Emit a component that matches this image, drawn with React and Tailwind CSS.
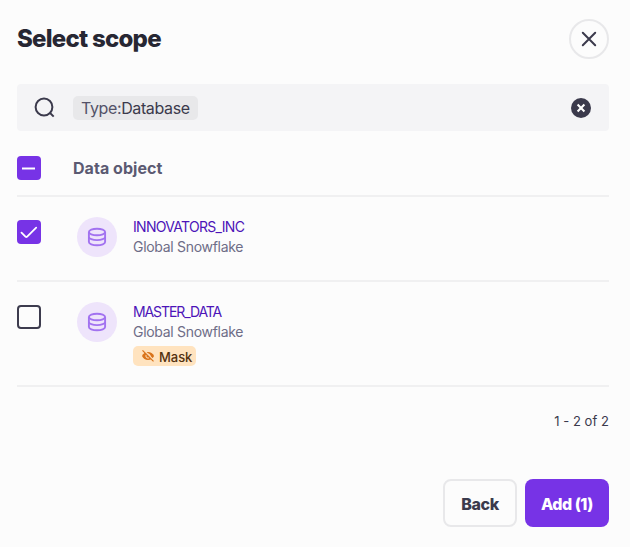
import React from "react";

function Checkbox({ state }) {
  if (state === "empty") {
    return <div className="h-6 w-6 shrink-0 rounded-[4px] border-2 border-[#3d3c4e]" />;
  }
  return (
    <div className="flex h-6 w-6 shrink-0 items-center justify-center rounded-[4px] bg-[#7733e6]">
      <svg width="24" height="24" viewBox="0 0 24 24" fill="none" stroke="#fff" strokeWidth="1.8" strokeLinecap="round" strokeLinejoin="round">
        {state === "mixed" ? <path d="M5 12.5h13" strokeWidth="2" strokeLinecap="butt" /> : <path d="M4.5 12.7l4.2 4.1q.6.5 1.2 0L19.2 7.7" />}
      </svg>
    </div>
  );
}

function DatabaseIcon() {
  return (
    <div className="flex h-10 w-10 shrink-0 items-center justify-center rounded-full bg-[#eee4fb]">
      <svg width="20" height="20" viewBox="0 0 20 20" fill="none" stroke="#a272f0" strokeWidth="1.9">
        <ellipse cx="10" cy="5" rx="8.1" ry="3.2" />
        <path d="M1.9 5v10c0 1.8 3.6 3.2 8.1 3.2s8.1-1.4 8.1-3.2V5" />
        <path d="M1.9 9.9c0 1.8 3.6 3.2 8.1 3.2s8.1-1.4 8.1-3.2" />
      </svg>
    </div>
  );
}

function MaskBadge() {
  return (
    <div className="mt-1 flex h-5 w-[63px] items-center gap-1 rounded-[5px] bg-[#ffe3bf] pl-2">
      <svg className="shrink-0" width="14" height="14" viewBox="0 0 14 14" fill="none">
        <path d="M1 7C2.3 4.4 4.4 3.1 7 3.1S11.8 4.4 13.1 7C11.8 9.6 9.7 10.9 7 10.9S2.3 9.6 1 7Z" fill="#d9731a" />
        <circle cx="7" cy="7" r="2.1" stroke="#ffe3bf" strokeWidth="1" />
        <path d="M2.6 1.1l10.6 10.6" stroke="#ffe3bf" strokeWidth="1.5" />
        <path d="M1.5 1.4l11 11" stroke="#d9731a" strokeWidth="1.2" />
      </svg>
      <span className="pt-px text-[13px] leading-5 font-medium tracking-[-0.05px] text-[#53310f]">Mask</span>
    </div>
  );
}

function ObjectRow({ state, name, nameClass, height, masked }) {
  return (
    <div className={`flex items-start border-b-2 border-[#f0f0f1] ${height}`}>
      <div className="pt-[23px]">
        <Checkbox state={state} />
      </div>
      <div className="ml-9 pt-5">
        <DatabaseIcon />
      </div>
      <div className="ml-4 pt-5">
        <div className={`text-[14px] leading-5 text-[#4c14b8] ${nameClass}`}>{name}</div>
        <div className="text-[14px] leading-5 tracking-[-0.3px] whitespace-nowrap text-[#6e6d87]">Global Snowflake</div>
        {masked && <MaskBadge />}
      </div>
    </div>
  );
}

export default function App() {
  return (
    <div className="flex h-[547px] w-[630px] flex-col overflow-hidden bg-[#fcfcfc] pr-[21px] pl-[17px] font-['Inter','Liberation_Sans',sans-serif]">
      <header className="mt-[18px] flex h-[41px] items-center justify-between">
        <h1 className="pt-px text-[24px] leading-8 font-extrabold tracking-[-0.75px] text-[#272733]">Select scope</h1>
        <button aria-label="Close" className="flex h-10 w-10 items-center justify-center rounded-full border-2 border-[#e8e8ea]">
          <svg width="16" height="16" viewBox="0 0 16 16" stroke="#3b3a4c" strokeWidth="2" strokeLinecap="round">
            <path d="M1.8 1.8l12.4 12.4M14.2 1.8L1.8 14.2" />
          </svg>
        </button>
      </header>

      <div className="mt-[25px] flex h-[47px] shrink-0 items-center rounded-[4px] bg-[#f4f4f6] pr-[18px] pl-[17px]">
        <svg width="22" height="22" viewBox="0 0 22 22" fill="none" stroke="#3b3a4c" strokeWidth="2">
          <circle cx="10" cy="10" r="8.4" />
          <path d="M15.8 15.8l3.9 3.8" />
        </svg>
        <div className="ml-[17px] flex h-6 w-[125px] items-center rounded-[5px] bg-[#e8e8ea] pl-2 text-[16px] tracking-[-0.38px] whitespace-nowrap text-[#3b3a4c]">
          <span className="text-[#535268]">Type:</span>
          <span>Database</span>
        </div>
        <svg className="ml-auto" width="20" height="20" viewBox="0 0 20 20">
          <circle cx="10" cy="10" r="10" fill="#3b3a4c" />
          <path d="M6.6 6.6l6.8 6.8M13.4 6.6l-6.8 6.8" stroke="#fff" strokeWidth="2.1" />
        </svg>
      </div>

      <div className="flex h-[66px] shrink-0 items-center border-b-2 border-[#f0f0f1] pt-[9px]">
        <Checkbox state="mixed" />
        <span className="ml-8 text-[16px] leading-6 font-bold tracking-[0.05px] text-[#5b5a72]">Data object</span>
      </div>
      <ObjectRow state="checked" name="INNOVATORS_INC" nameClass="tracking-[-0.7px]" height="h-[85px]" />
      <ObjectRow state="empty" name="MASTER_DATA" nameClass="tracking-[-1.1px]" height="h-[105px]" masked />

      <div className="mt-6 flex justify-end text-[13px] leading-5 tracking-[0.05px] text-[#3b3a4c]">1 - 2 of 2</div>

      <footer className="mt-12 flex justify-end gap-2 text-[16px] font-extrabold">
        <button className="h-12 w-[74px] rounded-[8px] border-2 border-[#e8e8ea] pt-px tracking-[-0.4px] text-[#3b3a4c]">Back</button>
        <button className="h-12 w-[84px] rounded-[8px] bg-[#7733e6] pt-px tracking-[-0.5px] whitespace-nowrap text-white">Add (1)</button>
      </footer>
    </div>
  );
}
